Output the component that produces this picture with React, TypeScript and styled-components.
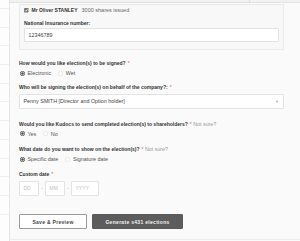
import React from "react";
import styled, { createGlobalStyle } from "styled-components";

const Global = createGlobalStyle`
  html, body { margin: 0; padding: 0; background: #fafafa; }
  body { font-family: "Liberation Sans", Arial, sans-serif; color: #333; overflow: hidden; }
  * { box-sizing: border-box; }
`;

const Page = styled.div`
  display: flex;
  width: 300px;
  height: 241px;
  overflow: hidden;
`;

const Sidebar = styled.div`
  width: 10px;
  flex: none;
  background: #fdfdfd;
  border-right: 1px solid #e6e6e6;
  padding-top: 8px;
  display: flex;
  flex-direction: column;
`;

const SideRow = styled.div`
  height: 18.7px;
  border-top: 1px solid #eeeeee;
`;

const Main = styled.div`
  flex: 1;
  display: flex;
  flex-direction: column;
  height: 240px;
  border-bottom: 1px solid #ececec;
`;

const TopBar = styled.div`
  height: 3px;
  background: #f1f1f1;
  border-bottom: 1px solid #e3e3e3;
  display: flex;
  justify-content: flex-end;
  padding-right: 50px;
`;

const TopDivider = styled.div`
  width: 1px;
  background: #dcdcdc;
`;

const Content = styled.div`
  padding: 0 16px 0 9px;
  display: flex;
  flex-direction: column;
`;

const Card = styled.div`
  margin-top: 1px;
  border: 1px solid #ebebeb;
  background: #f8f8f8;
  padding: 2px 4px 7px 4px;
  display: flex;
  flex-direction: column;
`;

const CheckRow = styled.div`
  height: 7px;
  display: flex;
  align-items: center;
  gap: 3px;
  font-size: 5px;
  line-height: 7px;
`;

const Name = styled.span`
  font-weight: 700;
  color: #333;
`;

const Muted = styled.span`
  color: #666;
  font-size: 5.5px;
  margin-left: 1px;
`;

const Label = styled.div<{ $mt: number }>`
  margin-top: ${(p) => p.$mt}px;
  height: 6px;
  line-height: 6px;
  font-size: 5px;
  font-weight: 700;
  color: #333;
  white-space: nowrap;
`;

const Star = styled.span`
  color: #e2505a;
  font-weight: 400;
  margin-left: 2px;
`;

const NotSure = styled.span`
  color: #999;
  font-weight: 400;
  font-size: 5.3px;
  margin-left: 1.5px;
`;

const TextInput = styled.div<{ $mt: number }>`
  margin-top: ${(p) => p.$mt}px;
  height: 14.5px;
  background: #fff;
  border: 1px solid #e3e3e3;
  border-radius: 1px;
  display: flex;
  align-items: center;
  padding-left: 3.5px;
  font-size: 5.4px;
  color: #444;
`;

const SelectBox = styled(TextInput)`
  justify-content: space-between;
  padding-right: 4px;
`;

const Caret = styled.span`
  color: #aaa;
  font-size: 4px;
`;

const RadioRow = styled.div<{ $mt: number }>`
  margin-top: ${(p) => p.$mt}px;
  height: 6px;
  display: flex;
  align-items: center;
  padding-left: 1px;
  gap: 7px;
  font-size: 5.4px;
  color: #555;
`;

const RadioItem = styled.label`
  display: flex;
  align-items: center;
  gap: 2.5px;
`;

const DateRow = styled.div<{ $mt: number }>`
  margin-top: ${(p) => p.$mt}px;
  display: flex;
  align-items: center;
  gap: 2px;
`;

const DateBox = styled.div<{ $w: number }>`
  width: ${(p) => p.$w}px;
  height: 14.6px;
  background: #fff;
  border: 1px solid #e3e3e3;
  border-radius: 1px;
  display: flex;
  align-items: center;
  padding-left: 3.5px;
  font-size: 5px;
  color: #c0c0c0;
`;

const Sep = styled.span`
  width: 2px;
  text-align: center;
  font-size: 5px;
  color: #aaa;
`;

const ButtonRow = styled.div<{ $mt: number }>`
  margin-top: ${(p) => p.$mt}px;
  display: flex;
  gap: 5px;
`;

const Button = styled.button<{ $primary?: boolean; $w: number }>`
  width: ${(p) => p.$w}px;
  height: 14.7px;
  padding: 0;
  border-radius: 1px;
  border: 1px solid ${(p) => (p.$primary ? "#5a5a5a" : "#9a9a9a")};
  background: ${(p) => (p.$primary ? "#5c5c5c" : "#ffffff")};
  color: ${(p) => (p.$primary ? "#f2f2f2" : "#444")};
  font-family: "Liberation Sans", Arial, sans-serif;
  font-weight: 700;
  font-size: 5px;
  letter-spacing: 0.3px;
  display: flex;
  align-items: center;
  justify-content: center;
`;

const Radio = ({ checked }: { checked?: boolean }) => (
  <svg width="5" height="5" viewBox="0 0 10 10">
    {checked ? (
      <>
        <circle cx="5" cy="5" r="4.4" fill="#fff" stroke="#4a4a4a" strokeWidth="1.6" />
        <circle cx="5" cy="5" r="2.4" fill="#4a4a4a" />
      </>
    ) : (
      <circle cx="5" cy="5" r="4.4" fill="#fff" stroke="#d6d6d6" strokeWidth="1" />
    )}
  </svg>
);

const Checkbox = () => (
  <svg width="4.5" height="4.5" viewBox="0 0 10 10">
    <rect x="0" y="0" width="10" height="10" rx="1" fill="#7a7a7a" />
    <path d="M2.2 5.2 L4.2 7.2 L7.9 2.9" fill="none" stroke="#fff" strokeWidth="1.6" />
  </svg>
);

export default function App() {
  return (
    <Page>
      <Global />
      <Sidebar>
        {Array.from({ length: 12 }).map((_, i) => (
          <SideRow key={i} />
        ))}
      </Sidebar>
      <Main>
        <TopBar>
          <TopDivider />
        </TopBar>
        <Content>
          <Card>
            <CheckRow>
              <Checkbox />
              <Name>Mr Oliver STANLEY</Name>
              <Muted>3000 shares issued</Muted>
            </CheckRow>
            <Label $mt={6}>National Insurance number:</Label>
            <TextInput $mt={1.5}>12346789</TextInput>
          </Card>

          <Label $mt={9.5}>
            How would you like election(s) to be signed?<Star>*</Star>
          </Label>
          <RadioRow $mt={4.5}>
            <RadioItem>
              <Radio checked />
              Electronic
            </RadioItem>
            <RadioItem>
              <Radio />
              Wet
            </RadioItem>
          </RadioRow>

          <Label $mt={8}>
            Who will be signing the election(s) on behalf of the company?:<Star>*</Star>
          </Label>
          <SelectBox $mt={4}>
            <span>Penny SMITH [Director and Option holder]</span>
            <Caret>▼</Caret>
          </SelectBox>

          <Label $mt={12.5}>
            Would you like Kudocs to send completed election(s) to shareholders?<Star>*</Star>
            <NotSure>Not sure?</NotSure>
          </Label>
          <RadioRow $mt={3.5}>
            <RadioItem>
              <Radio checked />
              Yes
            </RadioItem>
            <RadioItem>
              <Radio />
              No
            </RadioItem>
          </RadioRow>

          <Label $mt={9}>
            What date do you want to show on the election(s)?<Star>*</Star>
            <NotSure>Not sure?</NotSure>
          </Label>
          <RadioRow $mt={4.7}>
            <RadioItem>
              <Radio checked />
              Specific date
            </RadioItem>
            <RadioItem>
              <Radio />
              Signature date
            </RadioItem>
          </RadioRow>

          <Label $mt={9.3}>
            Custom date<Star>*</Star>
          </Label>
          <DateRow $mt={3.7}>
            <DateBox $w={20}>DD</DateBox>
            <Sep>-</Sep>
            <DateBox $w={20}>MM</DateBox>
            <Sep>-</Sep>
            <DateBox $w={28}>YYYY</DateBox>
          </DateRow>

          <ButtonRow $mt={18.7}>
            <Button $w={68}>Save &amp; Preview</Button>
            <Button $primary $w={91}>Generate s431 elections</Button>
          </ButtonRow>
        </Content>
      </Main>
    </Page>
  );
}
